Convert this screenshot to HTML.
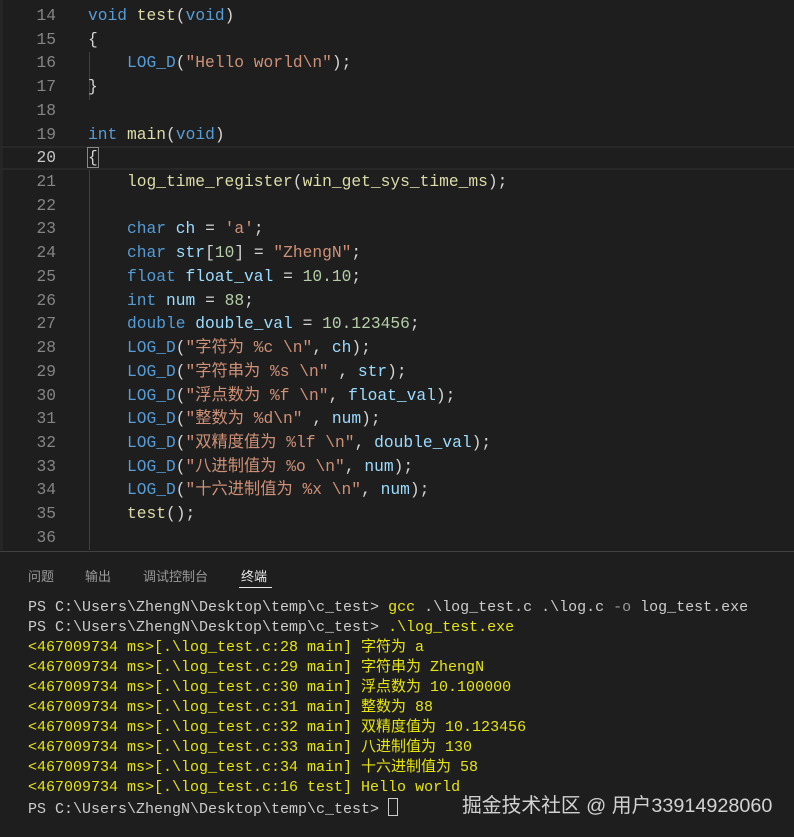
<!DOCTYPE html>
<html><head><meta charset="utf-8"><style>
body{margin:0;width:794px;height:836px;background:#1e1e1e;overflow:hidden;position:relative;font-family:"Liberation Mono","Noto Sans CJK SC",monospace}
.ed{position:absolute;left:0;top:4px;width:794px}
.l{height:23.73px;line-height:23.73px;font-size:16.25px;white-space:pre;position:relative;color:#d4d4d4}
.n{position:absolute;right:738px;color:#858585;text-align:right}
.c{position:absolute;left:88px}
.k{color:#569cd6}.f{color:#dcdcaa}.s{color:#ce9178}.v{color:#9cdcfe}.m{color:#b5cea8}
.cur{border-top:2px solid #282828;border-bottom:2px solid #282828;box-sizing:border-box}
.guide{position:absolute;left:89px;width:1px;background:#404040}
.panel{position:absolute;left:0;top:551px;width:794px;height:285px;border-top:1px solid #414141;background:#1e1e1e}
.tab{position:absolute;top:14px;font-size:13px;color:#999;font-family:"Liberation Sans","Noto Sans CJK SC",sans-serif}
.term{position:absolute;left:28px;top:46px;font-size:15px;line-height:20px;white-space:pre;color:#cccccc}
.y{color:#e5e510}
.wm{position:absolute;left:462px;top:789px;font-size:19.8px;color:#e6e6e6;font-family:"Liberation Sans","Noto Sans CJK SC",sans-serif;opacity:.9}
</style></head><body>
<div style="position:absolute;left:0;top:0;width:3px;height:550px;background:#252525"></div>
<div class="guide" style="top:52px;height:48px"></div>
<div class="guide" style="top:170px;height:380px"></div>
<div class="ed">
<div class="l"><span class="n">14</span><span class="c"><span class="k">void</span> <span class="f">test</span>(<span class="k">void</span>)</span></div>
<div class="l"><span class="n">15</span><span class="c">{</span></div>
<div class="l"><span class="n">16</span><span class="c">    <span class="k">LOG_D</span>(<span class="s">"Hello world\n"</span>);</span></div>
<div class="l"><span class="n">17</span><span class="c">}</span></div>
<div class="l"><span class="n">18</span></div>
<div class="l"><span class="n">19</span><span class="c"><span class="k">int</span> <span class="f">main</span>(<span class="k">void</span>)</span></div>
<div class="l cur"><span class="n" style="color:#c6c6c6;top:-2px">20</span><span class="c" style="top:-2px"><span style="outline:1px solid #888;">{</span></span></div>
<div class="l"><span class="n">21</span><span class="c">    <span class="f">log_time_register</span>(<span class="f">win_get_sys_time_ms</span>);</span></div>
<div class="l"><span class="n">22</span></div>
<div class="l"><span class="n">23</span><span class="c">    <span class="k">char</span> <span class="v">ch</span> = <span class="s">'a'</span>;</span></div>
<div class="l"><span class="n">24</span><span class="c">    <span class="k">char</span> <span class="v">str</span>[<span class="m">10</span>] = <span class="s">"ZhengN"</span>;</span></div>
<div class="l"><span class="n">25</span><span class="c">    <span class="k">float</span> <span class="v">float_val</span> = <span class="m">10.10</span>;</span></div>
<div class="l"><span class="n">26</span><span class="c">    <span class="k">int</span> <span class="v">num</span> = <span class="m">88</span>;</span></div>
<div class="l"><span class="n">27</span><span class="c">    <span class="k">double</span> <span class="v">double_val</span> = <span class="m">10.123456</span>;</span></div>
<div class="l"><span class="n">28</span><span class="c">    <span class="k">LOG_D</span>(<span class="s">"字符为 %c \n"</span>, <span class="v">ch</span>);</span></div>
<div class="l"><span class="n">29</span><span class="c">    <span class="k">LOG_D</span>(<span class="s">"字符串为 %s \n"</span> , <span class="v">str</span>);</span></div>
<div class="l"><span class="n">30</span><span class="c">    <span class="k">LOG_D</span>(<span class="s">"浮点数为 %f \n"</span>, <span class="v">float_val</span>);</span></div>
<div class="l"><span class="n">31</span><span class="c">    <span class="k">LOG_D</span>(<span class="s">"整数为 %d\n"</span> , <span class="v">num</span>);</span></div>
<div class="l"><span class="n">32</span><span class="c">    <span class="k">LOG_D</span>(<span class="s">"双精度值为 %lf \n"</span>, <span class="v">double_val</span>);</span></div>
<div class="l"><span class="n">33</span><span class="c">    <span class="k">LOG_D</span>(<span class="s">"八进制值为 %o \n"</span>, <span class="v">num</span>);</span></div>
<div class="l"><span class="n">34</span><span class="c">    <span class="k">LOG_D</span>(<span class="s">"十六进制值为 %x \n"</span>, <span class="v">num</span>);</span></div>
<div class="l"><span class="n">35</span><span class="c">    <span class="f">test</span>();</span></div>
<div class="l"><span class="n">36</span></div>
</div>
<div class="panel">
<span class="tab" style="left:28px">问题</span>
<span class="tab" style="left:85px">输出</span>
<span class="tab" style="left:143px">调试控制台</span>
<span class="tab" style="left:241px;color:#e7e7e7">终端</span>
<div style="position:absolute;left:239px;top:35px;width:33px;height:1px;background:#e7e7e7"></div>
<div class="term">PS C:\Users\ZhengN\Desktop\temp\c_test> <span class="y">gcc</span> .\log_test.c .\log.c <span style="color:#999">-o</span> log_test.exe
PS C:\Users\ZhengN\Desktop\temp\c_test> <span class="y">.\log_test.exe</span>
<span class="y">&lt;467009734 ms&gt;[.\log_test.c:28 main] 字符为 a
&lt;467009734 ms&gt;[.\log_test.c:29 main] 字符串为 ZhengN
&lt;467009734 ms&gt;[.\log_test.c:30 main] 浮点数为 10.100000
&lt;467009734 ms&gt;[.\log_test.c:31 main] 整数为 88
&lt;467009734 ms&gt;[.\log_test.c:32 main] 双精度值为 10.123456
&lt;467009734 ms&gt;[.\log_test.c:33 main] 八进制值为 130
&lt;467009734 ms&gt;[.\log_test.c:34 main] 十六进制值为 58
&lt;467009734 ms&gt;[.\log_test.c:16 test] Hello world</span>
PS C:\Users\ZhengN\Desktop\temp\c_test> <span style="display:inline-block;width:8px;height:16px;border:1px solid #ccc;vertical-align:-3px"></span></div>
</div>
<div class="wm">掘金技术社区 @ 用户33914928060</div>
</body></html>
